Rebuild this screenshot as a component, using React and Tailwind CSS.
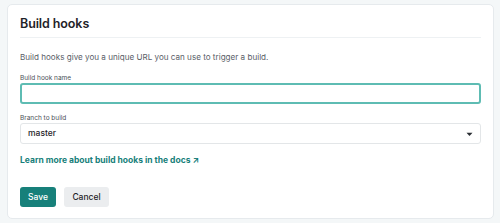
export default function App() {
  return (
    <div
      className="w-[500px] h-[223px] bg-[#f4f7f8] pt-[4px] pl-[7px] pr-[6px]"
      style={{ fontFamily: 'Inter, "Liberation Sans", sans-serif' }}
    >
      <div className="bg-white rounded-[5px] border border-[#e6eaed] h-[215px] px-[12px]">
        <h2 className="pt-[11px] text-[12.5px] leading-[16px] font-semibold text-[#1f2328] tracking-[-0.1px]">
          Build hooks
        </h2>
        <div className="mt-[5px] border-t border-[#eef1f3]" />

        <p className="mt-[13px] text-[8.1px] leading-[12px] text-[#5a6068]">
          Build hooks give you a unique URL you can use to trigger a build.
        </p>

        <label className="block mt-[11px] text-[6.5px] leading-[8px] text-[#4b5157]">Build hook name</label>
        <div className="mt-[1px] h-[21px] rounded-[3px] border-2 border-[#5ebcb3] bg-white" />

        <label className="block mt-[10px] text-[6.5px] leading-[8px] text-[#4b5157]">Branch to build</label>
        <div className="mt-[1px] h-[21px] rounded-[3px] border border-[#e3e6e8] bg-white flex items-center justify-between pl-[7px] pr-[7px]">
          <span className="text-[8.5px] font-medium text-[#1f2328]">master</span>
          <svg width="7" height="5" viewBox="0 0 7 5" className="mt-[1px]">
            <path d="M0.5 0.8 L3.5 4 L6.5 0.8 Z" fill="#2a2e33" />
          </svg>
        </div>

        <a className="block mt-[10px] text-[8.5px] leading-[12px] font-bold text-[#17807a]">
          Learn more about build hooks in the docs ↗
        </a>

        <div className="mt-[21px] flex gap-[8px]">
          <button className="h-[20px] w-[36px] rounded-[3px] bg-[#17807a] text-white text-[8.5px] font-medium">
            Save
          </button>
          <button className="h-[20px] w-[45px] rounded-[3px] bg-[#ebedef] text-[#1f2328] text-[8.5px] font-medium">
            Cancel
          </button>
        </div>
      </div>
    </div>
  )
}
